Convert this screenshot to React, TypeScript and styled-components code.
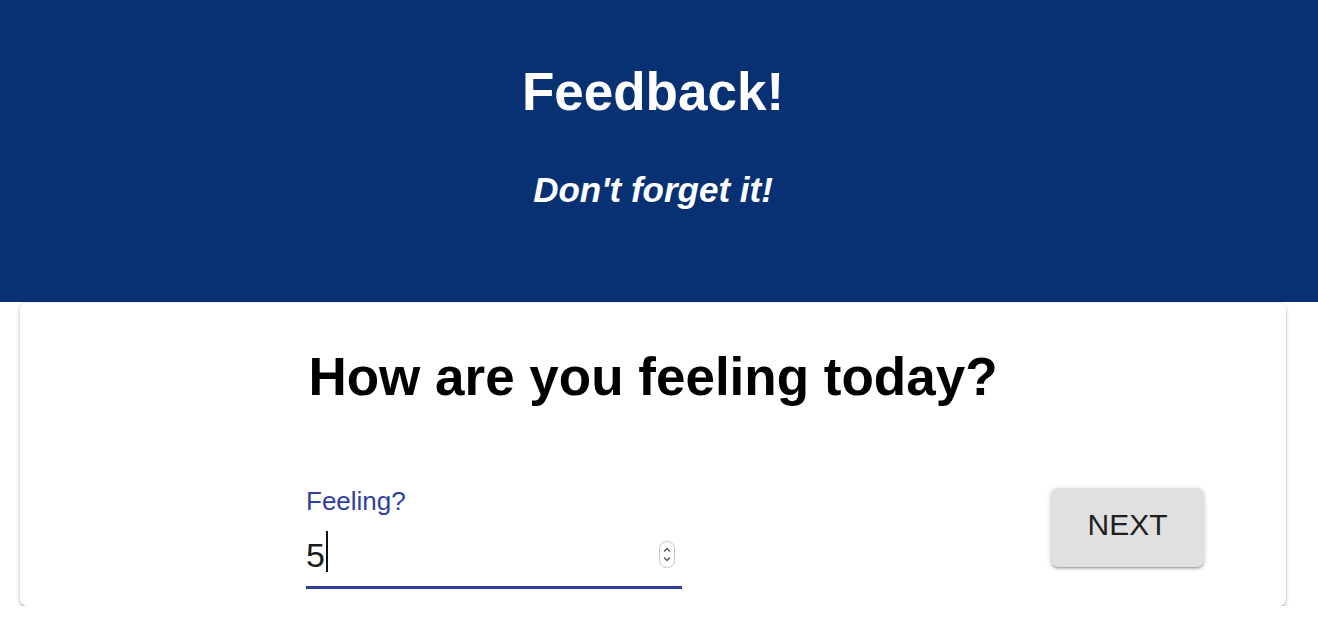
import { useState } from "react";
import styled, { createGlobalStyle } from "styled-components";

const GlobalStyle = createGlobalStyle`
  body {
    margin: 0;
    background: #ffffff;
    font-family: "Liberation Sans", Arial, Helvetica, sans-serif;
  }
`;

const Header = styled.header`
  height: 302px;
  box-sizing: border-box;
  padding: 62px 12px 0 0;
  background-color: #083173;
  color: #ffffff;
  text-align: center;
`;

const HeaderTitle = styled.h1`
  margin: 0;
  font-size: 53px;
  line-height: 60px;
  font-weight: 700;
`;

const HeaderSub = styled.h3`
  margin: 48px 0 0;
  font-size: 35px;
  line-height: 39px;
  font-weight: 700;
  font-style: italic;
`;

const Card = styled.section`
  margin: 1px 32px 0 20px;
  padding: 44px 0 17px;
  background: #ffffff;
  border-radius: 7px;
  box-shadow: 0 1px 4px rgba(0, 0, 0, 0.22), 0 2px 2px rgba(0, 0, 0, 0.14),
    0 3px 1px -2px rgba(0, 0, 0, 0.12);
`;

const Question = styled.h2`
  margin: 0;
  text-align: center;
  font-size: 53px;
  line-height: 60px;
  font-weight: 700;
  color: #000000;
`;

const FormRow = styled.div`
  display: flex;
  justify-content: space-between;
  align-items: flex-start;
  margin-top: 79px;
  padding: 0 82px 0 286px;
`;

const Field = styled.label`
  display: flex;
  flex-direction: column;
  width: 376px;
`;

const FieldLabel = styled.span`
  font-size: 26px;
  line-height: 30px;
  color: #303f9f;
`;

const InputWrap = styled.div`
  position: relative;
  margin-top: 19px;
  padding-bottom: 11px;
  border-bottom: 3px solid #303f9f;
`;

const Input = styled.input`
  display: block;
  width: 100%;
  height: 40px;
  box-sizing: border-box;
  padding: 0;
  border: none;
  outline: none;
  background: transparent;
  font-family: "Liberation Sans", Arial, Helvetica, sans-serif;
  font-size: 34px;
  line-height: 40px;
  color: #1a1a1a;
  caret-color: transparent;
`;

const Caret = styled.span`
  position: absolute;
  left: 20px;
  top: -4px;
  width: 2px;
  height: 41px;
  background: #111111;
  pointer-events: none;
`;

const Spinner = styled.svg`
  position: absolute;
  right: 7px;
  top: 6px;
`;

const NextButton = styled.button`
  width: 153px;
  height: 79px;
  margin-top: 2px;
  padding: 0 0 6px;
  border: none;
  border-radius: 7px;
  background: #e0e0e0;
  color: #1f1f1f;
  font-family: "Liberation Sans", Arial, Helvetica, sans-serif;
  font-size: 30px;
  box-shadow: 0 1px 5px rgba(0, 0, 0, 0.2), 0 2px 2px rgba(0, 0, 0, 0.14),
    0 3px 1px -2px rgba(0, 0, 0, 0.12);
  cursor: pointer;
`;

function App() {
  const [feeling, setFeeling] = useState("5");

  return (
    <>
      <GlobalStyle />
      <Header>
        <HeaderTitle>Feedback!</HeaderTitle>
        <HeaderSub>Don't forget it!</HeaderSub>
      </Header>
      <Card>
        <Question>How are you feeling today?</Question>
        <FormRow>
          <Field>
            <FieldLabel>Feeling?</FieldLabel>
            <InputWrap>
              <Input
                inputMode="numeric"
                value={feeling}
                onChange={(e) => setFeeling(e.target.value)}
              />
              <Caret />
              <Spinner width="16" height="27" viewBox="0 0 16 27">
                <rect x="0.5" y="0.5" width="15" height="26" rx="7" fill="#fff" stroke="#c4c4c4" />
                <path d="M5 10.5 L8 7.5 L11 10.5" fill="none" stroke="#555" strokeWidth="1.3" />
                <path d="M5 16.5 L8 19.5 L11 16.5" fill="none" stroke="#555" strokeWidth="1.3" />
              </Spinner>
            </InputWrap>
          </Field>
          <NextButton>NEXT</NextButton>
        </FormRow>
      </Card>
    </>
  );
}

export default App;
